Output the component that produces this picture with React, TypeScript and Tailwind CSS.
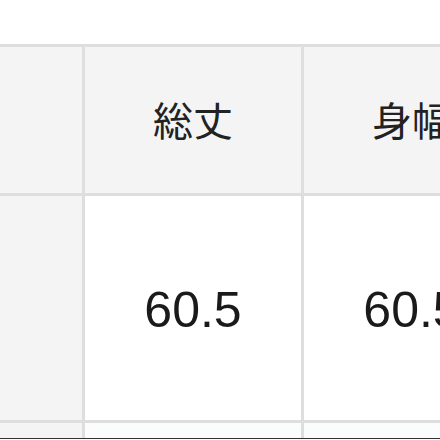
import React from 'react'

const cols = ['総丈', '身幅']
const vals = ['60.5', '60.5']

export default function App() {
  return (
    <div className="w-[440px] h-[440px] overflow-hidden bg-white flex flex-col" style={{ fontFamily: '"Liberation Sans", "Noto Sans CJK JP", sans-serif' }}>
      <div className="h-[44px] shrink-0 bg-white" />
      <div className="grid grid-cols-[82px_216px_216px] grid-rows-[146px_224px_15px] gap-[3px] bg-[#dedede] border-t-[3px] border-[#dedede] w-max">
        <div className="bg-[#f4f4f4]" />
        {cols.map(c => (
          <div key={c} className="bg-[#f4f4f5] flex items-center justify-center text-[40px] text-[#222] pt-1">{c}</div>
        ))}
        <div className="bg-[#f4f4f4]" />
        {vals.map((v, i) => (
          <div key={i} className="bg-white flex items-center justify-center text-[50px] text-[#1a1a1a] pt-1">{v}</div>
        ))}
        <div className="bg-[#f4f4f4]" />
        {vals.map((_, i) => (
          <div key={i} className="bg-[#fbfcfc]" />
        ))}
      </div>
      <div className="h-px bg-[#333] shrink-0" />
    </div>
  )
}
